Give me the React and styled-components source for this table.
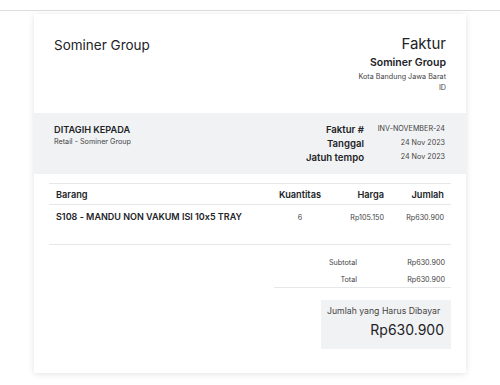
import React from 'react'
import styled, { createGlobalStyle } from 'styled-components'

const GlobalStyle = createGlobalStyle`
  html, body {
    margin: 0;
    padding: 0;
    background: #ffffff;
    font-family: Inter, "Noto Sans", "Liberation Sans", sans-serif;
    font-feature-settings: "calt" 0;
    color: #222326;
  }
`

const TopBar = styled.div`
  height: 10px;
  border-bottom: 1px solid #dcdde0;
`

const Page = styled.div`
  padding: 3px 34px 12px 34px;
`

const Card = styled.div`
  background: #fff;
  height: 359px;
  box-shadow: 0 1px 6px rgba(0, 0, 0, 0.12);
  display: flex;
  flex-direction: column;
`

const Header = styled.div`
  display: flex;
  justify-content: space-between;
  align-items: flex-start;
  padding: 22px 20px 0 20px;
  height: 77px;
`

const Company = styled.div`
  font-size: 13.5px;
  margin-top: 1px;
`

const HeaderRight = styled.div`
  text-align: right;
`

const Title = styled.div`
  font-size: 15px;
  line-height: 16px;
  margin-bottom: 4px;
`

const SellerName = styled.div`
  font-size: 10.5px;
  font-weight: 600;
  line-height: 14px;
  margin-bottom: 1px;
`

const SmallLine = styled.div`
  font-size: 7.2px;
  line-height: 11px;
  color: #444;
`

const Band = styled.div`
  background: #f1f2f4;
  height: 61px;
  display: flex;
  justify-content: space-between;
  align-items: flex-start;
  padding: 11px 21px 0 20px;
  box-sizing: border-box;
`

const BillTo = styled.div``

const BillTitle = styled.div`
  font-size: 9.2px;
  font-weight: 600;
  line-height: 12px;
`

const BillName = styled.div`
  font-size: 7.2px;
  line-height: 11px;
  color: #444;
`

const MetaGrid = styled.div`
  display: grid;
  grid-template-columns: auto 81px;
  align-content: start;
  align-items: center;
  margin-top: -1px;
`

const MetaLabel = styled.div`
  font-size: 9.6px;
  font-weight: 600;
  line-height: 14px;
  text-align: right;
`

const MetaValue = styled.div`
  font-size: 7.2px;
  line-height: 14px;
  text-align: right;
  color: #444;
  position: relative;
  top: -1px;
`

const Body = styled.div`
  padding: 9px 15px 0 15px;
`

const Table = styled.div`
  border-top: 1px solid #e6e7ea;
  border-bottom: 1px solid #e6e7ea;
`

const Row = styled.div`
  display: grid;
  grid-template-columns: 1fr 56px 63px 60px;
  align-items: start;
  border-bottom: ${p => (p.$head ? '1px solid #e6e7ea' : 'none')};
  height: ${p => (p.$head ? '21px' : '39px')};
  box-sizing: border-box;
  padding-top: ${p => (p.$head ? '4px' : '5px')};
`

const Cell = styled.div`
  padding: 0 7px;
  text-align: ${p => p.$align || 'left'};
  font-size: ${p => (p.$bold ? '9.2px' : '7.2px')};
  font-weight: ${p => (p.$bold ? 600 : 400)};
  color: ${p => (p.$bold ? '#222326' : '#444')};
  line-height: 13px;
  white-space: nowrap;
  padding-top: ${p => (p.$bold ? '0' : '1px')};
`

const ItemName = styled(Cell)`
  font-size: 9px;
`

const QtyCell = styled(Cell)`
  padding: 0;
  padding-top: ${p => (p.$bold ? '0' : '1px')};
  text-align: center;
`

const Totals = styled.div`
  margin-left: 225px;
  border-bottom: 1px solid #e6e7ea;
  padding: 11px 6px 1px 0;
  display: grid;
  grid-template-columns: 83px 1fr;
  row-gap: 4px;
`

const TotalLabel = styled.div`
  font-size: 7.2px;
  line-height: 13px;
  text-align: right;
  color: #444;
`

const TotalValue = styled.div`
  font-size: 7.2px;
  line-height: 13px;
  text-align: right;
  color: #444;
`

const DueBox = styled.div`
  margin: 12px 0 0 auto;
  width: 130px;
  height: 49px;
  background: #f1f2f4;
  box-sizing: border-box;
  padding: 5px 7px 0 6px;
`

const DueLabel = styled.div`
  font-size: 8.7px;
  line-height: 13px;
  color: #444;
`

const DueAmount = styled.div`
  font-size: 14px;
  line-height: 20px;
  text-align: right;
  margin-top: 2px;
`

export default function App() {
  const meta = [
    ['Faktur #', 'INV-NOVEMBER-24'],
    ['Tanggal', '24 Nov 2023'],
    ['Jatuh tempo', '24 Nov 2023'],
  ]

  return (
    <>
      <GlobalStyle />
      <TopBar />
      <Page>
        <Card>
          <Header>
            <Company>Sominer Group</Company>
            <HeaderRight>
              <Title>Faktur</Title>
              <SellerName>Sominer Group</SellerName>
              <SmallLine>Kota Bandung Jawa Barat</SmallLine>
              <SmallLine>ID</SmallLine>
            </HeaderRight>
          </Header>

          <Band>
            <BillTo>
              <BillTitle>DITAGIH KEPADA</BillTitle>
              <BillName>Retail - Sominer Group</BillName>
            </BillTo>
            <MetaGrid>
              {meta.map(([label, value]) => (
                <React.Fragment key={label}>
                  <MetaLabel>{label}</MetaLabel>
                  <MetaValue>{value}</MetaValue>
                </React.Fragment>
              ))}
            </MetaGrid>
          </Band>

          <Body>
            <Table>
              <Row $head>
                <Cell $bold>Barang</Cell>
                <QtyCell $bold>Kuantitas</QtyCell>
                <Cell $bold $align="right">Harga</Cell>
                <Cell $bold $align="right">Jumlah</Cell>
              </Row>
              <Row>
                <ItemName $bold>S108 - MANDU NON VAKUM ISI 10x5 TRAY</ItemName>
                <QtyCell>6</QtyCell>
                <Cell $align="right">Rp105.150</Cell>
                <Cell $align="right">Rp630.900</Cell>
              </Row>
            </Table>

            <Totals>
              <TotalLabel>Subtotal</TotalLabel>
              <TotalValue>Rp630.900</TotalValue>
              <TotalLabel>Total</TotalLabel>
              <TotalValue>Rp630.900</TotalValue>
            </Totals>

            <DueBox>
              <DueLabel>Jumlah yang Harus Dibayar</DueLabel>
              <DueAmount>Rp630.900</DueAmount>
            </DueBox>
          </Body>
        </Card>
      </Page>
    </>
  )
}
